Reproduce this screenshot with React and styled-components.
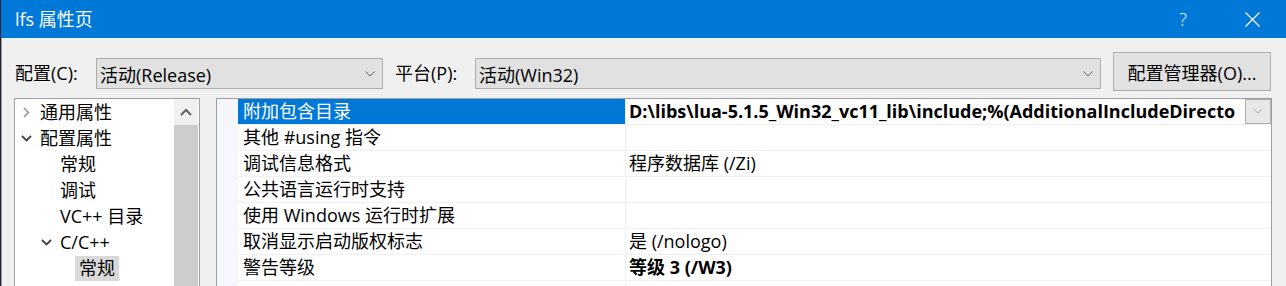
import React from "react";
import styled, { createGlobalStyle } from "styled-components";

const GlobalStyle = createGlobalStyle`
  html, body { margin: 0; padding: 0; background: #f0f0f0; }
  body { font-family: "Open Sans", "Noto Sans CJK SC", sans-serif; }
`;

const Frame = styled.div`
  width: 1286px;
  height: 286px;
  box-sizing: border-box;
  overflow: hidden;
  display: flex;
  flex-direction: column;
  border-left: 1px solid #1d2030;
  box-shadow: inset 1px 0 0 #9a9a9a;
  background: #f0f0f0;
  color: #000;
  font-size: 18px;
`;

const TitleBar = styled.div`
  height: 38px;
  flex: none;
  display: flex;
  align-items: center;
  background: #0078d7;
  color: #fff;
  padding-left: 14px;
`;

const Title = styled.div`
  flex: 1;
  line-height: 38px;
`;

const CaptionButton = styled.div`
  width: ${(p) => p.$width}px;
  height: 38px;
  display: flex;
  align-items: center;
  justify-content: center;
  font-weight: 300;
`;

const Toolbar = styled.div`
  height: 60px;
  flex: none;
  box-sizing: border-box;
  display: flex;
  align-items: flex-start;
  padding: 14px 15px 0 14px;
`;

const Label = styled.div`
  width: ${(p) => p.$width}px;
  margin-left: ${(p) => p.$gap || 0}px;
  margin-top: 6px;
  height: 31px;
  line-height: 31px;
  flex: none;
  white-space: nowrap;
`;

const Select = styled.div`
  width: ${(p) => (p.$width ? `${p.$width}px` : "auto")};
  flex: ${(p) => (p.$width ? "none" : "1")};
  margin-top: 6px;
  height: 31px;
  box-sizing: border-box;
  display: flex;
  align-items: center;
  padding: 0 7px 0 3px;
  border: 1px solid #adadad;
  background: #e1e1e1;
  white-space: nowrap;
`;

const SelectText = styled.span`
  flex: 1;
`;

const Button = styled.div`
  width: 158px;
  height: 39px;
  margin-left: 12px;
  flex: none;
  box-sizing: border-box;
  display: flex;
  align-items: center;
  justify-content: center;
  border: 1px solid #adadad;
  background: #e1e1e1;
  white-space: nowrap;
`;

const Body = styled.div`
  flex: 1;
  display: flex;
  align-items: flex-start;
  gap: 16px;
  padding: 0 14px 0 13px;
`;

const TreePanel = styled.div`
  width: 186px;
  height: 200px;
  flex: none;
  box-sizing: border-box;
  display: flex;
  border: 1px solid #a0a0a0;
  background: #fff;
`;

const TreeList = styled.div`
  flex: 1;
`;

const TreeRow = styled.div`
  height: 26px;
  display: flex;
  align-items: center;
  padding-left: ${(p) => Math.round(1 + p.$level * 19.5)}px;
`;

const Twisty = styled.span`
  width: 20px;
  height: 26px;
  flex: none;
  display: flex;
  align-items: center;
  justify-content: center;
`;

const TreeLabel = styled.span`
  height: 25px;
  line-height: 25px;
  padding: 0 4px;
  white-space: nowrap;
  background: ${(p) => (p.$selected ? "#d9d9d9" : "transparent")};
`;

const ScrollBar = styled.div`
  width: 24px;
  margin-right: 1px;
  flex: none;
  display: flex;
  flex-direction: column;
  background: #f0f0f0;
`;

const ScrollArrow = styled.div`
  height: 26px;
  display: flex;
  align-items: center;
  justify-content: center;
`;

const ScrollThumb = styled.div`
  flex: 1;
  background: #cdcdcd;
`;

const GridPanel = styled.div`
  flex: 1;
  height: 200px;
  box-sizing: border-box;
  border: 1px solid #a0a0a0;
  background: #fff;
`;

const GridRow = styled.div`
  display: grid;
  grid-template-columns: 21px 388px 1fr;
  height: 26px;
`;

const Gutter = styled.div`
  background: #f5f7fc;
`;

const NameCell = styled.div`
  box-sizing: border-box;
  padding-left: 5px;
  line-height: 25px;
  border-right: 1px solid #f0f0f0;
  border-bottom: 1px solid #f0f0f0;
  white-space: nowrap;
  overflow: hidden;
  background: ${(p) => (p.$selected ? "#0078d7" : "#fff")};
  color: ${(p) => (p.$selected ? "#fff" : "#000")};
`;

const ValueCell = styled.div`
  box-sizing: border-box;
  display: flex;
  align-items: center;
  min-width: 0;
  padding-left: 3px;
  border-bottom: 1px solid #f0f0f0;
`;

const ValueText = styled.span`
  flex: 1;
  min-width: 0;
  line-height: 25px;
  white-space: nowrap;
  overflow: hidden;
  font-weight: ${(p) => (p.$bold ? 700 : 400)};
`;

const DropButton = styled.div`
  width: 26px;
  height: 25px;
  flex: none;
  box-sizing: border-box;
  display: flex;
  align-items: center;
  justify-content: center;
  border: 1px solid #adadad;
  background: #e8e8e8;
`;

const ChevronDown = ({ w = 10, color = "#606060" }) => (
  <svg width={w} height={w / 2 + 1} viewBox="0 0 10 6">
    <polyline points="0.5,0.5 5,5 9.5,0.5" fill="none" stroke={color} strokeWidth="1" />
  </svg>
);

const CloseIcon = () => (
  <svg width="15" height="15" viewBox="0 0 15 15">
    <path d="M0.5 0.5 L14.5 14.5 M14.5 0.5 L0.5 14.5" stroke="#fff" strokeWidth="1.2" />
  </svg>
);

const TreeChevron = ({ open }) =>
  open ? (
    <svg width="11" height="7" viewBox="0 0 11 7">
      <polyline points="1,1 5.5,5.5 10,1" fill="none" stroke="#444" strokeWidth="1.8" />
    </svg>
  ) : (
    <svg width="7" height="11" viewBox="0 0 7 11">
      <polyline points="1,1 5.5,5.5 1,10" fill="none" stroke="#a8a8a8" strokeWidth="1.8" />
    </svg>
  );

const tree = [
  { level: 0, label: "通用属性", twisty: "closed" },
  { level: 0, label: "配置属性", twisty: "open" },
  { level: 1, label: "常规" },
  { level: 1, label: "调试" },
  { level: 1, label: "VC++ 目录" },
  { level: 1, label: "C/C++", twisty: "open" },
  { level: 2, label: "常规", selected: true },
];

const rows = [
  {
    name: "附加包含目录",
    value: "D:\\libs\\lua-5.1.5_Win32_vc11_lib\\include;%(AdditionalIncludeDirecto",
    bold: true,
    selected: true,
  },
  { name: "其他 #using 指令", value: "" },
  { name: "调试信息格式", value: "程序数据库 (/Zi)" },
  { name: "公共语言运行时支持", value: "" },
  { name: "使用 Windows 运行时扩展", value: "" },
  { name: "取消显示启动版权标志", value: "是 (/nologo)" },
  { name: "警告等级", value: "等级 3 (/W3)", bold: true },
  { name: "", value: "" },
];

export default function App() {
  return (
    <>
      <GlobalStyle />
      <Frame>
        <TitleBar>
          <Title>lfs 属性页</Title>
          <CaptionButton $width={70}>?</CaptionButton>
          <CaptionButton $width={68}>
            <CloseIcon />
          </CaptionButton>
        </TitleBar>

        <Toolbar>
          <Label $width={81}>配置(C):</Label>
          <Select $width={287}>
            <SelectText>活动(Release)</SelectText>
            <ChevronDown />
          </Select>
          <Label $width={80} $gap={12}>
            平台(P):
          </Label>
          <Select>
            <SelectText>活动(Win32)</SelectText>
            <ChevronDown />
          </Select>
          <Button>配置管理器(O)...</Button>
        </Toolbar>

        <Body>
          <TreePanel>
            <TreeList>
              {tree.map((item, i) => (
                <TreeRow key={i} $level={item.level}>
                  <Twisty>
                    {item.twisty && <TreeChevron open={item.twisty === "open"} />}
                  </Twisty>
                  <TreeLabel $selected={item.selected}>{item.label}</TreeLabel>
                </TreeRow>
              ))}
            </TreeList>
            <ScrollBar>
              <ScrollArrow>
                <svg width="12" height="8" viewBox="0 0 12 8">
                  <polyline points="1,7 6,2 11,7" fill="none" stroke="#606060" strokeWidth="2" />
                </svg>
              </ScrollArrow>
              <ScrollThumb />
            </ScrollBar>
          </TreePanel>

          <GridPanel>
            {rows.map((row, i) => (
              <GridRow key={i}>
                <Gutter />
                <NameCell $selected={row.selected}>{row.name}</NameCell>
                <ValueCell>
                  <ValueText $bold={row.bold}>{row.value}</ValueText>
                  {row.selected && (
                    <DropButton>
                      <ChevronDown w={8} color="#909090" />
                    </DropButton>
                  )}
                </ValueCell>
              </GridRow>
            ))}
          </GridPanel>
        </Body>
      </Frame>
    </>
  );
}
